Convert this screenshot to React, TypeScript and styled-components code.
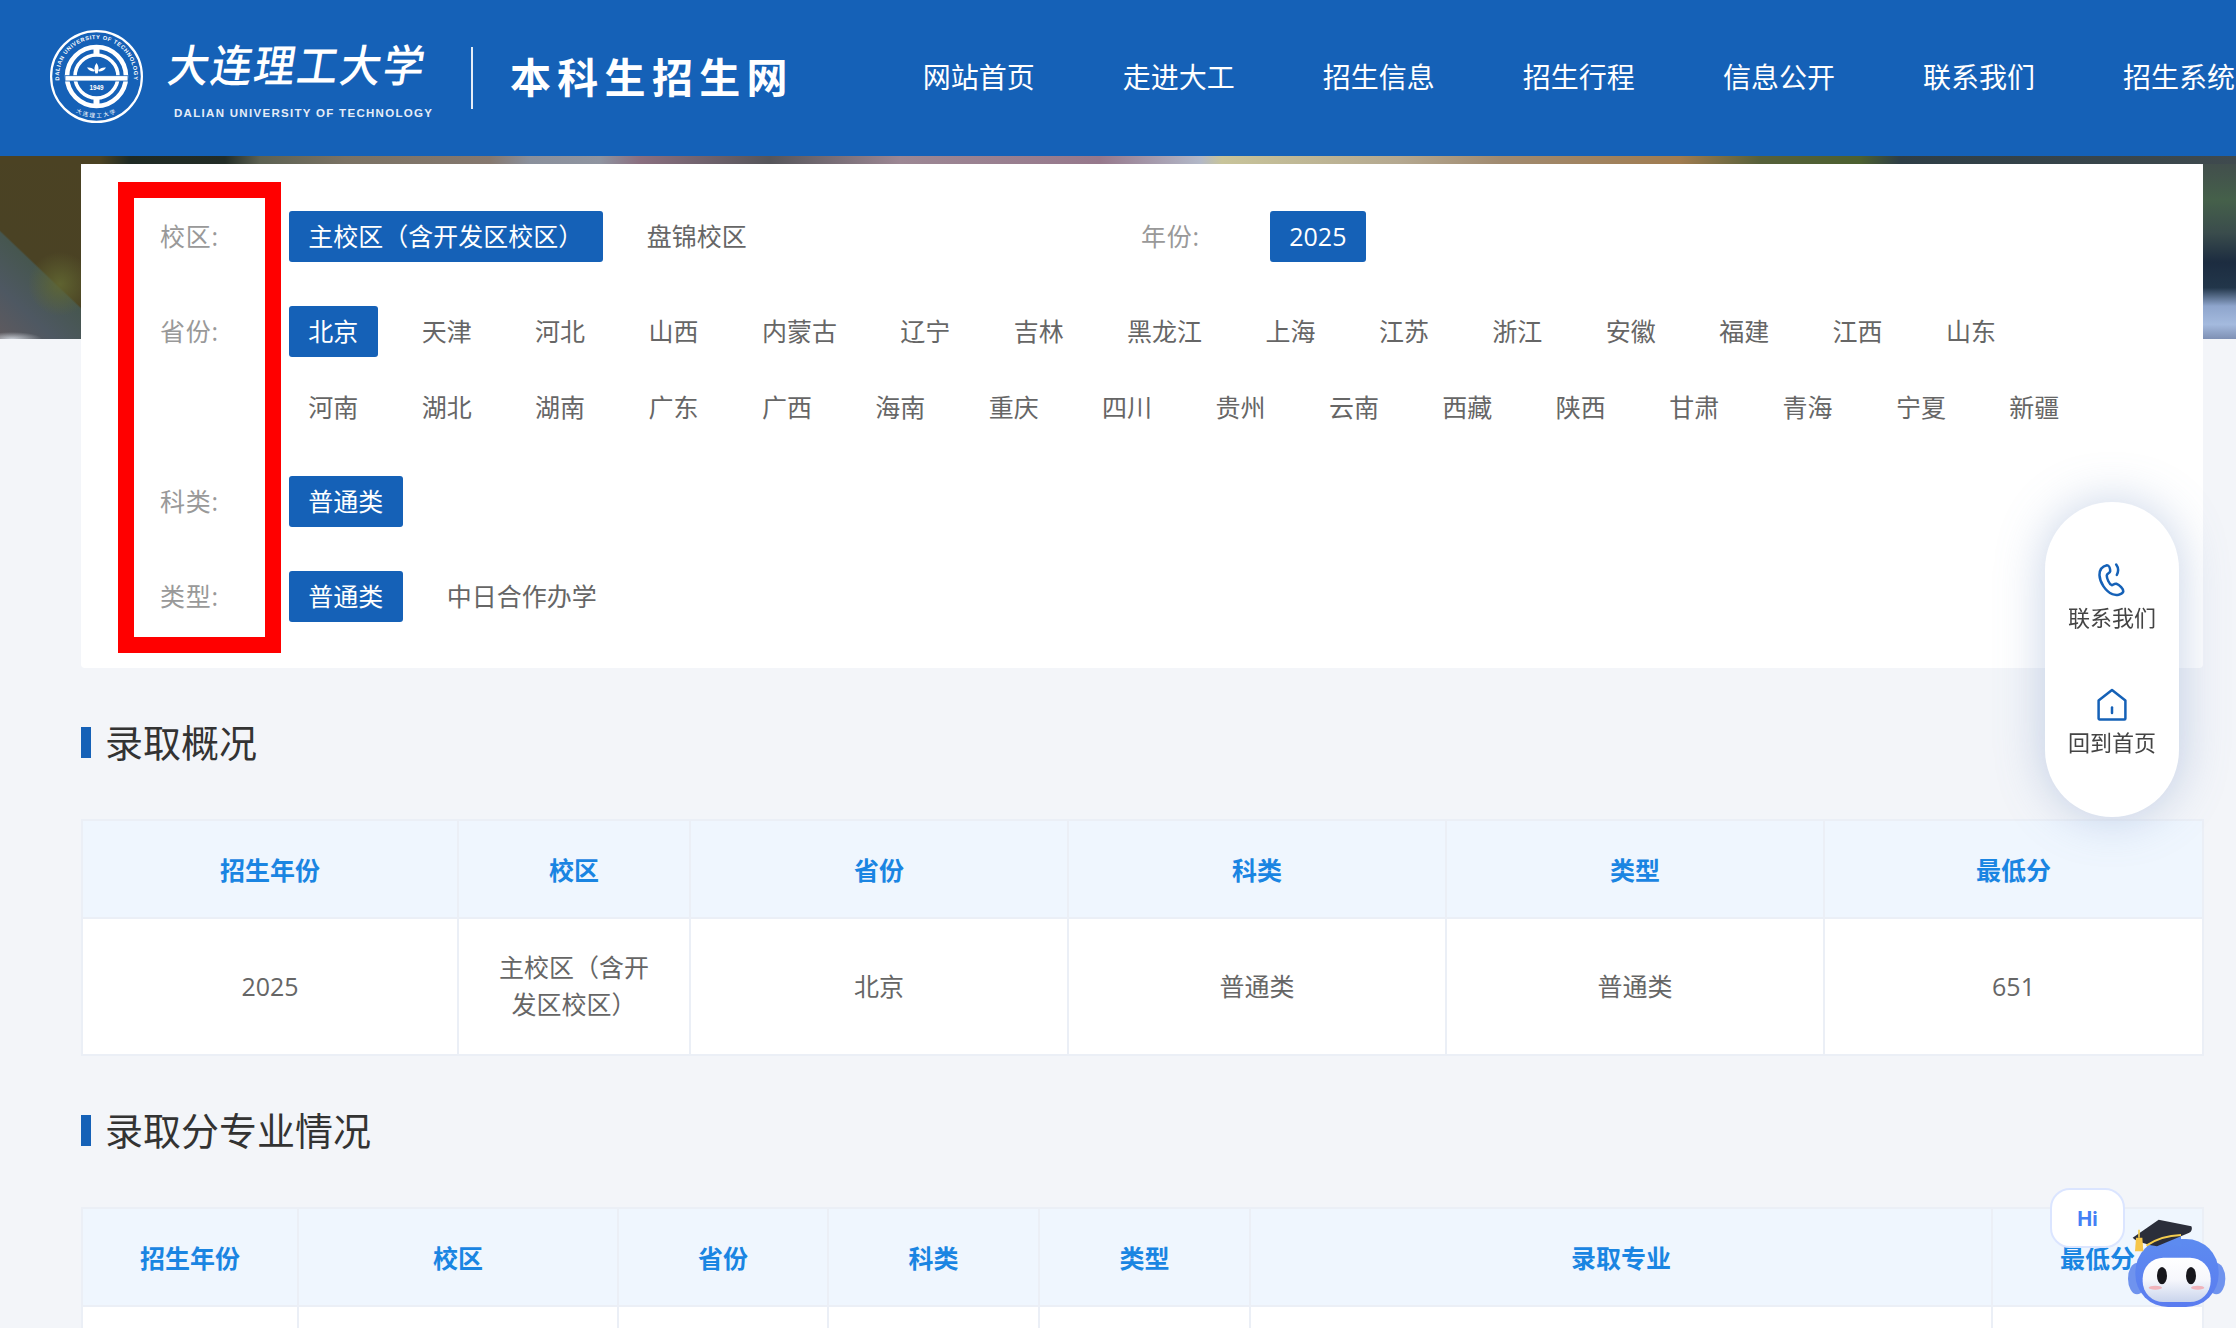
import styled, { createGlobalStyle } from 'styled-components'

const BLUE = '#1561b7'
const FONT = '"Open Sans", "Noto Sans CJK SC", sans-serif'

const NAV_ITEMS = ['网站首页', '走进大工', '招生信息', '招生行程', '信息公开', '联系我们', '招生系统']

const PROVINCES = [
  '北京', '天津', '河北', '山西', '内蒙古', '辽宁', '吉林', '黑龙江', '上海', '江苏', '浙江', '安徽', '福建', '江西', '山东',
  '河南', '湖北', '湖南', '广东', '广西', '海南', '重庆', '四川', '贵州', '云南', '西藏', '陕西', '甘肃', '青海', '宁夏', '新疆',
]

const SUMMARY_COLS = [376, 232, 378, 378, 378, 379]
const SUMMARY_HEAD = ['招生年份', '校区', '省份', '科类', '类型', '最低分']
const SUMMARY_ROW = ['2025', '主校区（含开发区校区）', '北京', '普通类', '普通类', '651']

const MAJOR_COLS = [216, 320, 210, 211, 211, 742, 211]
const MAJOR_HEAD = ['招生年份', '校区', '省份', '科类', '类型', '录取专业', '最低分']

const GlobalStyle = createGlobalStyle`
  html, body {
    margin: 0;
    height: 1328px;
    overflow: hidden;
    background: #f3f5f9;
    font-family: ${FONT};
  }
`

const Header = styled.header`
  display: flex;
  align-items: center;
  height: 156px;
  padding-left: 50px;
  background: ${BLUE};
  color: #fff;
  overflow: hidden;
`

const Seal = styled.svg`
  flex: none;
  width: 93px;
  height: 93px;
  margin: -3px 26px 0 0;
`

const Wordmark = styled.div`
  flex: none;
  width: 264px;
  margin-top: 1px;
`

const WordmarkCn = styled.div`
  font-family: "Noto Sans CJK SC", sans-serif;
  font-size: 41px;
  font-weight: 500;
  line-height: 50px;
  letter-spacing: 2px;
  white-space: nowrap;
  transform: skewX(-9deg) scaleY(1.08);
  transform-origin: left center;
`

const WordmarkEn = styled.div`
  margin: 18px 0 0 5px;
  font-family: "Liberation Sans", sans-serif;
  font-size: 11.5px;
  font-weight: 700;
  line-height: 14px;
  letter-spacing: 1.3px;
  white-space: nowrap;
  color: #e6edf7;
`

const Divider = styled.span`
  flex: none;
  width: 2px;
  height: 62px;
  margin: 0 37px 0 38px;
  background: #e6edf7;
`

const SiteTitle = styled.div`
  flex: none;
  margin-top: -6px;
  font-family: "Noto Sans CJK SC", sans-serif;
  font-size: 41px;
  font-weight: 700;
  letter-spacing: 6.3px;
  white-space: nowrap;
`

const Nav = styled.nav`
  display: flex;
  flex: none;
  gap: 88px;
  margin: -2px 0 0 129px;
`

const NavLink = styled.a`
  font-size: 28px;
  line-height: 40px;
  white-space: nowrap;
`

const Main = styled.main`
  padding: 8px 33px 0 81px;
  background:
    linear-gradient(90deg, #4b4223 0, #4b4223 100px, #1e2a24 130px, #222c26 225px, #5c6152 260px, #7a7264 345px, #85786f 490px, #8a909c 530px, #8f94a0 600px, #8a6f80 640px, #55555a 770px, #9c8794 900px, #96788c 1100px, #b2b8c8 1200px, #c8c49a 1222px, #b4a890 1400px, #a08a70 1500px, #a07c50 1680px, #56603a 1760px, #4c6030 1860px, #2e3e46 1900px, #3f4a4e 2236px) 0 0 / 100% 8px no-repeat,
    radial-gradient(circle at 60px 128px, rgba(98, 104, 50, 0.85) 0, rgba(98, 104, 50, 0) 32px) 0 0 / 81px 183px no-repeat,
    radial-gradient(30px 7px at 12px 183px, rgba(215, 222, 230, 0.85) 0, rgba(215, 222, 230, 0) 100%) 0 0 / 81px 183px no-repeat,
    linear-gradient(223.6deg, #4b4223 0, #4a4224 58%, #46564f 59%, #4e5862 80%, #5f5a5e 100%) 0 0 / 81px 183px no-repeat,
    linear-gradient(180deg, #414b4d 0, #45604a 24%, #3a4c4c 42%, #1c2c40 58%, #22364a 72%, #8ea5cc 82%, #a4bade 92%, #7e90b4 100%) 100% 0 / 33px 183px no-repeat,
    #f3f5f9;
`

const FilterPanel = styled.section`
  padding: 47px 80px 21px;
  background: #fff;
  border-radius: 4px;
`

const FilterRow = styled.div`
  display: flex;
  margin-bottom: 19px;

  &:last-child {
    margin-bottom: 0;
  }
`

const FilterGroup = styled.div<{ $width?: number }>`
  display: flex;
  flex: ${p => (p.$width ? `0 0 ${p.$width}px` : '1 1 0')};
  min-width: 0;
`

const FilterLabel = styled.div`
  flex: none;
  width: 129px;
  margin-left: -1px;
  font-size: 25px;
  line-height: 50.75px;
  letter-spacing: 0.8px;
  color: #999;
`

const OptionList = styled.div`
  display: flex;
  flex-wrap: wrap;
  flex: 1;
  min-width: 0;
`

const Option = styled.a<{ $active?: boolean }>`
  height: 50.75px;
  margin: 0 24.9px 25px 0;
  padding: 0 19.25px;
  border-radius: 3px;
  font-size: 25px;
  line-height: 50.75px;
  white-space: nowrap;
  color: ${p => (p.$active ? '#fff' : '#666')};
  background: ${p => (p.$active ? BLUE : 'transparent')};
`

const SectionTitle = styled.h2<{ $top: number }>`
  display: flex;
  align-items: center;
  height: 31px;
  margin: ${p => p.$top}px 0 61px;
  padding-left: 14px;
  border-left: 10px solid ${BLUE};
  font-size: 38px;
  font-weight: 400;
  line-height: 31px;
  color: #333;
`

const DataTable = styled.table`
  width: 2121px;
  table-layout: fixed;
  border-collapse: collapse;
  background: #fff;
`

const HeadCell = styled.th`
  height: 96px;
  padding: 0;
  border: 2px solid #ebeff6;
  background: #eff6fe;
  font-size: 25px;
  font-weight: 700;
  color: #1a85e2;
`

const BodyCell = styled.td`
  height: 135px;
  padding: 0 30px;
  border: 2px solid #ebeff6;
  font-size: 25px;
  line-height: 37px;
  text-align: center;
  color: #666;
`

const SidePill = styled.aside`
  position: fixed;
  top: 502px;
  right: 57px;
  display: flex;
  flex-direction: column;
  align-items: center;
  width: 134px;
  height: 315px;
  padding-top: 61px;
  box-sizing: border-box;
  border-radius: 67px;
  background: #fff;
  box-shadow: 0 0 48px rgba(120, 148, 196, 0.42);
`

const SideLink = styled.a`
  display: flex;
  flex-direction: column;
  align-items: center;
  height: 125px;
  font-size: 22px;
  line-height: 30px;
  color: #444;
`

const SideIcon = styled.svg`
  display: block;
  height: 34px;
  margin-bottom: 5px;
`

const HiBubble = styled.div`
  position: fixed;
  top: 1188px;
  left: 2050px;
  width: 75px;
  height: 60px;
  box-sizing: border-box;
  border: 2px solid #dbe5ff;
  border-radius: 20px;
  background: #fff;
  font-family: Inter, sans-serif;
  font-size: 20px;
  font-weight: 700;
  line-height: 58px;
  text-align: center;
  color: #4480f5;
`

const Robot = styled.svg`
  position: fixed;
  top: 1216.67px;
  left: 2126.67px;
  width: 100px;
  height: 92px;
`

const RedMark = styled.div`
  position: fixed;
  top: 182px;
  left: 118px;
  width: 163px;
  height: 471px;
  box-sizing: border-box;
  border: 16px solid #ff0000;
`

const SealMark = () => (
  <Seal viewBox="0 0 93 93">
    <defs>
      <path id="seal-top" d="M 11.7 60.5 A 37.5 37.5 0 1 1 81.3 60.5" />
      <path id="seal-bottom" d="M 16 74 A 41 41 0 0 0 77 74" />
    </defs>
    <circle cx="46.5" cy="46.5" r="45.4" fill="none" stroke="#fff" strokeWidth="2.2" />
    <text fill="#fff" fontFamily="Liberation Sans, sans-serif" fontSize="5.6" fontWeight="700" letterSpacing="0.6" textAnchor="middle">
      <textPath href="#seal-top" startOffset="50%">DALIAN UNIVERSITY OF TECHNOLOGY</textPath>
    </text>
    <text fill="#fff" fontFamily="Noto Sans CJK SC, sans-serif" fontSize="5.6" letterSpacing="1.6" textAnchor="middle">
      <textPath href="#seal-bottom" startOffset="50%">大连理工大学</textPath>
    </text>
    <circle cx="46.5" cy="46.5" r="29.5" fill="none" stroke="#fff" strokeWidth="4.6" />
    <circle cx="46.5" cy="46.5" r="21.5" fill="none" stroke="#fff" strokeWidth="3.6" />
    <rect x="43.5" y="15" width="6" height="9" fill="#fff" />
    <rect x="43.5" y="67" width="6" height="11" fill="#fff" />
    <rect x="15" y="45.7" width="63" height="5.3" fill="#fff" stroke={BLUE} strokeWidth="0.8" />
    <path
      d="M46.5 33 C49 36 49 40 47.6 43.6 H45.4 C44 40 44 36 46.5 33 Z M44 41.5 C41 41.5 38.5 40 37 37.5 C40.5 37 43 38.5 44.5 40 Z M49 41.5 C52 41.5 54.5 40 56 37.5 C52.5 37 50 38.5 48.5 40 Z"
      fill="#fff"
    />
    <text x="46.5" y="59.5" fill="#fff" fontFamily="Liberation Sans, sans-serif" fontSize="6.4" fontWeight="700" textAnchor="middle">1949</text>
  </Seal>
)

const PhoneIcon = () => (
  <SideIcon viewBox="0 0 27 34" fill="none" stroke={BLUE} strokeWidth="2.5" strokeLinecap="round" strokeLinejoin="round">
    <path d="M9 2.2C4 3.4 1.3 7.4 1.5 12.4 1.8 19.4 7.6 28.4 14.4 31.2 18.2 32.6 24 31.8 25.2 28.8 25.8 26.2 21.4 21.8 18.4 20.8 16.2 20.2 15.2 22.2 13.8 22.2 11.2 21.2 8.6 15.2 8.8 12.2 9.2 10.2 11.8 10.2 12.2 8.2 12.2 5.8 11.2 2.2 9 2.2Z" />
    <path d="M18.2 1.6C20.4 4.6 20.4 9 18.8 12" />
  </SideIcon>
)

const HomeIcon = () => (
  <SideIcon viewBox="0 0 30 34" fill="none" stroke={BLUE} strokeWidth="2.5" strokeLinecap="round" strokeLinejoin="round">
    <path d="M15 2L28.4 12.6V30.4A1 1 0 0 1 27.4 31.4H2.6A1 1 0 0 1 1.6 30.4V12.6Z" />
    <path d="M15 19.4V25" />
  </SideIcon>
)

const RobotMark = () => (
  <Robot viewBox="500 200 300 276">
    <defs>
      <linearGradient id="robot-shell" x1="0" y1="0" x2="0" y2="1">
        <stop offset="0" stopColor="#5d8bf0" />
        <stop offset="1" stopColor="#5a7cf0" />
      </linearGradient>
      <linearGradient id="robot-face" x1="0" y1="0" x2="0" y2="1">
        <stop offset="0" stopColor="#ffffff" />
        <stop offset="0.5" stopColor="#f6f7fc" />
        <stop offset="1" stopColor="#c9d4ec" />
      </linearGradient>
    </defs>
    <ellipse cx="530" cy="385" rx="27" ry="47" fill="#6f93ee" />
    <ellipse cx="768" cy="385" rx="27" ry="47" fill="#6f93ee" />
    <rect x="525" y="266" width="250" height="204" rx="98" fill="url(#robot-shell)" />
    <rect x="547" y="322" width="204" height="133" rx="62" fill="url(#robot-face)" />
    <ellipse cx="605" cy="376" rx="15" ry="26" fill="#17171c" />
    <ellipse cx="692" cy="376" rx="15" ry="26" fill="#17171c" />
    <ellipse cx="585" cy="412" rx="20" ry="6" fill="#f0b4bc" />
    <ellipse cx="712" cy="412" rx="20" ry="6" fill="#f0b4bc" />
    <path d="M560 283C590 262 630 254 662 258V290C625 276 590 280 560 298Z" fill="#5d8bf0" />
    <path d="M517 262L595 208 693 228C697 236 693 246 685 248L590 288C570 284 530 276 517 262Z" fill="#2b2e3a" />
    <path d="M558 286C590 264 630 255 662 254" fill="none" stroke="#f4cc4e" strokeWidth="6" />
    <path d="M536 238V262" stroke="#f4cc4e" strokeWidth="5" />
    <path d="M527 262H546L549 303H524Z" fill="#f6c64a" />
  </Robot>
)

const App = () => {
  return (
    <>
      <GlobalStyle />

      {/* 顶部导航 */}
      <Header>
        <SealMark />
        <Wordmark>
          <WordmarkCn>大连理工大学</WordmarkCn>
          <WordmarkEn>DALIAN UNIVERSITY OF TECHNOLOGY</WordmarkEn>
        </Wordmark>
        <Divider />
        <SiteTitle>本科生招生网</SiteTitle>
        <Nav>
          {NAV_ITEMS.map(item => (
            <NavLink key={item}>{item}</NavLink>
          ))}
        </Nav>
      </Header>

      <Main>
        {/* 筛选条件 */}
        <FilterPanel>
          <FilterRow>
            <FilterGroup $width={981}>
              <FilterLabel>校区:</FilterLabel>
              <OptionList>
                <Option $active>主校区（含开发区校区）</Option>
                <Option>盘锦校区</Option>
              </OptionList>
            </FilterGroup>
            <FilterGroup>
              <FilterLabel>年份:</FilterLabel>
              <OptionList>
                <Option $active>2025</Option>
              </OptionList>
            </FilterGroup>
          </FilterRow>
          <FilterRow>
            <FilterGroup>
              <FilterLabel>省份:</FilterLabel>
              <OptionList>
                {PROVINCES.map((name, index) => (
                  <Option key={name} $active={index === 0}>
                    {name}
                  </Option>
                ))}
              </OptionList>
            </FilterGroup>
          </FilterRow>
          <FilterRow>
            <FilterGroup>
              <FilterLabel>科类:</FilterLabel>
              <OptionList>
                <Option $active>普通类</Option>
              </OptionList>
            </FilterGroup>
          </FilterRow>
          <FilterRow>
            <FilterGroup>
              <FilterLabel>类型:</FilterLabel>
              <OptionList>
                <Option $active>普通类</Option>
                <Option>中日合作办学</Option>
              </OptionList>
            </FilterGroup>
          </FilterRow>
        </FilterPanel>

        {/* 录取概况 */}
        <SectionTitle $top={59}>录取概况</SectionTitle>
        <DataTable>
          <colgroup>
            {SUMMARY_COLS.map((width, index) => (
              <col key={index} width={width} />
            ))}
          </colgroup>
          <thead>
            <tr>
              {SUMMARY_HEAD.map(title => (
                <HeadCell key={title}>{title}</HeadCell>
              ))}
            </tr>
          </thead>
          <tbody>
            <tr>
              {SUMMARY_ROW.map((value, index) => (
                <BodyCell key={index}>{value}</BodyCell>
              ))}
            </tr>
          </tbody>
        </DataTable>

        {/* 录取分专业情况 */}
        <SectionTitle $top={59}>录取分专业情况</SectionTitle>
        <DataTable>
          <colgroup>
            {MAJOR_COLS.map((width, index) => (
              <col key={index} width={width} />
            ))}
          </colgroup>
          <thead>
            <tr>
              {MAJOR_HEAD.map(title => (
                <HeadCell key={title}>{title}</HeadCell>
              ))}
            </tr>
          </thead>
          <tbody>
            <tr>
              {MAJOR_HEAD.map(title => (
                <BodyCell key={title} />
              ))}
            </tr>
          </tbody>
        </DataTable>
      </Main>

      {/* 右侧悬浮 */}
      <SidePill>
        <SideLink>
          <PhoneIcon />
          联系我们
        </SideLink>
        <SideLink>
          <HomeIcon />
          回到首页
        </SideLink>
      </SidePill>

      <HiBubble>Hi</HiBubble>
      <RobotMark />

      {/* 标注框 */}
      <RedMark />
    </>
  )
}

export default App
